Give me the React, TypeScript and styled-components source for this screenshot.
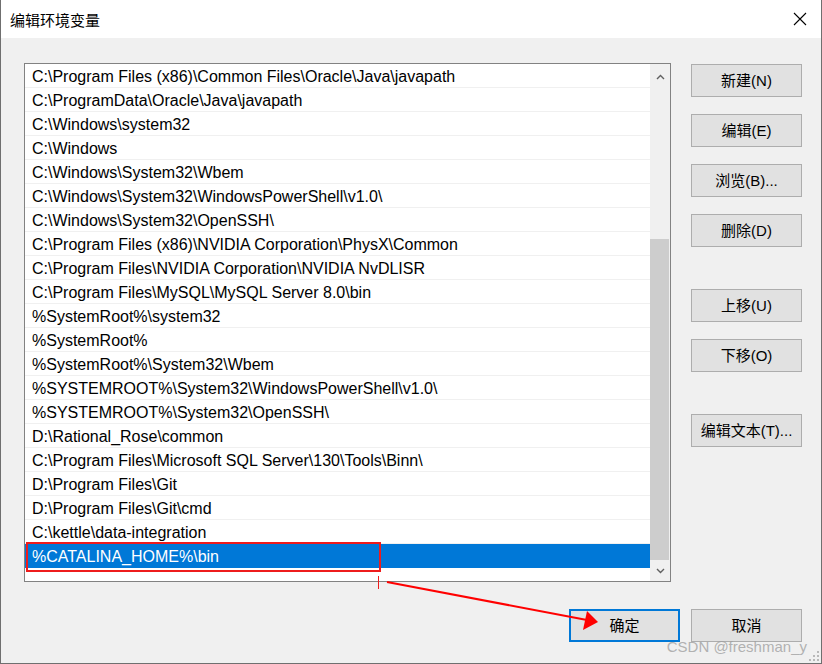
import React from "react"
import styled, { createGlobalStyle } from "styled-components"

const paths = [
  "C:\\Program Files (x86)\\Common Files\\Oracle\\Java\\javapath",
  "C:\\ProgramData\\Oracle\\Java\\javapath",
  "C:\\Windows\\system32",
  "C:\\Windows",
  "C:\\Windows\\System32\\Wbem",
  "C:\\Windows\\System32\\WindowsPowerShell\\v1.0\\",
  "C:\\Windows\\System32\\OpenSSH\\",
  "C:\\Program Files (x86)\\NVIDIA Corporation\\PhysX\\Common",
  "C:\\Program Files\\NVIDIA Corporation\\NVIDIA NvDLISR",
  "C:\\Program Files\\MySQL\\MySQL Server 8.0\\bin",
  "%SystemRoot%\\system32",
  "%SystemRoot%",
  "%SystemRoot%\\System32\\Wbem",
  "%SYSTEMROOT%\\System32\\WindowsPowerShell\\v1.0\\",
  "%SYSTEMROOT%\\System32\\OpenSSH\\",
  "D:\\Rational_Rose\\common",
  "C:\\Program Files\\Microsoft SQL Server\\130\\Tools\\Binn\\",
  "D:\\Program Files\\Git",
  "D:\\Program Files\\Git\\cmd",
  "C:\\kettle\\data-integration",
  "%CATALINA_HOME%\\bin",
]

const selectedIndex = paths.length - 1

const sideButtons: { label: string; gapBefore?: boolean }[] = [
  { label: "新建(N)" },
  { label: "编辑(E)" },
  { label: "浏览(B)..." },
  { label: "删除(D)" },
  { label: "上移(U)", gapBefore: true },
  { label: "下移(O)" },
  { label: "编辑文本(T)...", gapBefore: true },
]

const GlobalStyle = createGlobalStyle`
  html, body {
    margin: 0;
    padding: 0;
    background: #ffffff;
  }
  body {
    font-family: "Liberation Sans", "Noto Sans CJK SC", sans-serif;
  }
`

const Window = styled.div`
  position: relative;
  width: 822px;
  height: 664px;
  box-sizing: border-box;
  border: 1px solid #6f6f6f;
  border-top: none;
  display: flex;
  flex-direction: column;
  overflow: hidden;
`

const TitleBar = styled.div`
  height: 38px;
  flex: none;
  background: #ffffff;
  display: flex;
  align-items: center;
  justify-content: space-between;
  padding: 0 14px 0 9px;
`

const Title = styled.span`
  font-family: "Noto Sans CJK SC", sans-serif;
  font-size: 15px;
  color: #000;
`

const Body = styled.div`
  flex: 1;
  background: #f0f0f0;
  display: flex;
  flex-direction: column;
  padding: 25px 19px 0 23px;
`

const TopRow = styled.div`
  display: flex;
  gap: 20px;
`

const ListBox = styled.div`
  width: 647px;
  height: 519px;
  box-sizing: border-box;
  border: 1px solid #828282;
  background: #ffffff;
  display: flex;
`

const Rows = styled.div`
  flex: 1;
  display: flex;
  flex-direction: column;
`

const Row = styled.div<{ $selected?: boolean }>`
  height: 24px;
  box-sizing: border-box;
  padding: 3px 0 0 7px;
  display: flex;
  align-items: center;
  font-family: "Liberation Sans", "Noto Sans CJK SC", sans-serif;
  font-size: 16px;
  white-space: nowrap;
  color: ${(p) => (p.$selected ? "#ffffff" : "#000000")};
  background: ${(p) => (p.$selected ? "#0078d7" : "#ffffff")};
  border-bottom: 1px solid ${(p) => (p.$selected ? "#0078d7" : "#f0f0f0")};
`

const ScrollBar = styled.div`
  width: 20px;
  flex: none;
  background: #f0f0f0;
  display: flex;
  flex-direction: column;
`

const ScrollArrow = styled.div<{ $h: number }>`
  height: ${(p) => p.$h}px;
  flex: none;
  display: flex;
  align-items: center;
  justify-content: center;
`

const Track = styled.div`
  flex: 1;
  display: flex;
  flex-direction: column;
`

const Thumb = styled.div`
  background: #cdcdcd;
  margin-right: 1px;
`

const ButtonColumn = styled.div`
  width: 111px;
  padding-top: 1px;
  display: flex;
  flex-direction: column;
  gap: 17px;
`

const DialogButton = styled.button<{ $primary?: boolean; $gapBefore?: boolean }>`
  width: 111px;
  height: 33px;
  box-sizing: border-box;
  margin: ${(p) => (p.$gapBefore ? "25px" : "0")} 0 0 0;
  padding: 0 0 2px 0;
  background: #e1e1e1;
  border: ${(p) => (p.$primary ? "2px solid #0078d7" : "1px solid #adadad")};
  border-radius: 0;
  font-family: "Liberation Sans", "Noto Sans CJK SC", sans-serif;
  font-size: 15px;
  color: #000;
  display: flex;
  align-items: center;
  justify-content: center;
`

const Footer = styled.div`
  margin-top: 27px;
  display: flex;
  justify-content: flex-end;
  gap: 11px;
`

const Overlay = styled.svg`
  position: absolute;
  left: 0;
  top: 0;
  pointer-events: none;
`

const Watermark = styled.div`
  position: absolute;
  right: 14px;
  bottom: 8px;
  font-family: "Liberation Sans", sans-serif;
  font-size: 15px;
  color: rgba(160, 160, 160, 0.8);
`

const Grip = styled.svg`
  position: absolute;
  right: 2px;
  bottom: 2px;
`

const Chevron = ({ down }: { down?: boolean }) => (
  <svg width="9" height="6" viewBox="0 0 9 6">
    <polyline
      points={down ? "1,1 4.5,4.5 8,1" : "1,5 4.5,1.5 8,5"}
      fill="none"
      stroke="#606060"
      strokeWidth="1.4"
    />
  </svg>
)

export default function App() {
  return (
    <>
      <GlobalStyle />
      <Window>
        <TitleBar>
          <Title>编辑环境变量</Title>
          <svg width="14" height="14" viewBox="0 0 14 14">
            <path d="M1 1 L13 13 M13 1 L1 13" stroke="#000" strokeWidth="1.1" />
          </svg>
        </TitleBar>
        <Body>
          <TopRow>
            <ListBox>
              <Rows>
                {paths.map((p, i) => (
                  <Row key={p} $selected={i === selectedIndex}>
                    {p}
                  </Row>
                ))}
              </Rows>
              <ScrollBar>
                <ScrollArrow $h={26}>
                  <Chevron />
                </ScrollArrow>
                <Track>
                  <div style={{ height: 149 }} />
                  <Thumb style={{ height: 321 }} />
                </Track>
                <ScrollArrow $h={21}>
                  <Chevron down />
                </ScrollArrow>
              </ScrollBar>
            </ListBox>
            <ButtonColumn>
              {sideButtons.map((b) => (
                <DialogButton key={b.label} $gapBefore={b.gapBefore}>
                  {b.label}
                </DialogButton>
              ))}
            </ButtonColumn>
          </TopRow>
          <Footer>
            <DialogButton $primary>确定</DialogButton>
            <DialogButton>取消</DialogButton>
          </Footer>
        </Body>

        <Overlay width="822" height="664" viewBox="0 0 822 664">
          <rect x="26" y="543" width="353" height="28" fill="none" stroke="#ee1c1c" strokeWidth="2" />
          <line x1="377.5" y1="576" x2="377.5" y2="589" stroke="#ee1c1c" strokeWidth="1" />
          <line x1="386" y1="582" x2="586" y2="620" stroke="#ff0000" strokeWidth="2" />
          <polygon points="597,622 582,630 586,611" fill="#ff0000" />
        </Overlay>
        <Watermark>CSDN @freshman_y</Watermark>
        <Grip width="10" height="10" viewBox="0 0 10 10">
          <rect x="8" y="0" width="2" height="2" fill="#b8b8b8" />
          <rect x="4" y="4" width="2" height="2" fill="#b8b8b8" />
          <rect x="8" y="4" width="2" height="2" fill="#b8b8b8" />
          <rect x="0" y="8" width="2" height="2" fill="#b8b8b8" />
          <rect x="4" y="8" width="2" height="2" fill="#b8b8b8" />
          <rect x="8" y="8" width="2" height="2" fill="#b8b8b8" />
        </Grip>
      </Window>
    </>
  )
}
